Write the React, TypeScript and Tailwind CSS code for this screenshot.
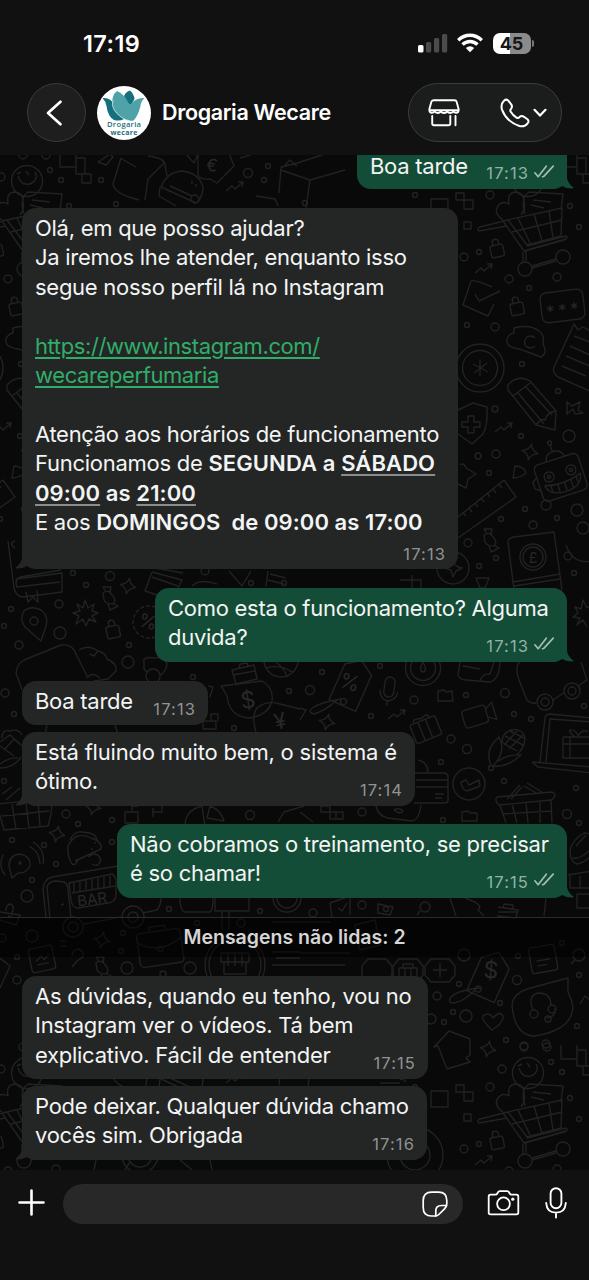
import React from 'react';
import clsx from 'clsx';

// Wallpaper primitives
const DOTS_TOP: [number, number, number][] = [
    [524, 155, 4], [547, 155, 4], [551, 170, 2.5], [562, 180, 2.5], [101, 180, 2.5], [502, 177, 4],
    [248, 173, 4.5], [268, 166, 2.5], [264, 180, 2.5], [415, 195, 2.5], [490, 195, 4], [464, 257, 4],
    [479, 252, 2.5], [570, 206, 2.5], [579, 227, 2.5], [557, 277, 4], [509, 279, 4], [529, 288, 2.5],
    [467, 325, 2.5], [495, 327, 4], [522, 364, 2.5], [558, 391, 2.5], [495, 409, 3], [521, 436, 2.5],
    [569, 436, 6], [496, 454, 4], [478, 456, 3], [489, 473, 2.5], [525, 509, 2.5], [501, 519, 2.5],
    [533, 525, 4], [546, 505, 5], [577, 510, 6], [557, 518, 2.5], [583, 528, 6], [468, 543, 4],
    [195, 199, 4], [116, 204, 2.5], [305, 203, 2.5],
];

const DOTS: [number, number, number][] = [
    [496, 558, 2.5], [479, 566, 2.5], [568, 556, 4], [574, 573, 2.5], [73, 573, 2.5], [110, 576, 4.5],
    [86, 585, 2.5], [59, 604, 4], [11, 609, 2.5], [4, 626, 2.5], [60, 633, 6], [19, 645, 4], [129, 645, 2.5],
    [128, 662, 6], [205, 571, 4], [251, 583, 2.5], [289, 691, 2.5], [5, 693, 4], [14, 714, 2.5], [4, 781, 2.5],
    [193, 677, 2.5], [234, 728, 2.5], [322, 672, 2.5], [310, 690, 4.5], [380, 666, 2.5], [414, 700, 4],
    [466, 695, 2.5], [505, 693, 4.5], [371, 716, 2.5], [514, 714, 2.5], [531, 719, 2.5], [451, 739, 4],
    [467, 749, 4.5], [441, 762, 2.5], [504, 781, 2.5], [576, 788, 2.5], [567, 814, 4.5], [579, 823, 2.5],
    [443, 820, 2.5], [362, 812, 4], [362, 905, 4], [386, 909, 2.5], [313, 913, 4], [66, 814, 4], [78, 824, 2.5],
    [112, 820, 2.5], [250, 815, 4.5], [12, 840, 2.5], [44, 845, 2.5], [112, 842, 2.5], [56, 864, 2.5],
    [32, 880, 2.5], [27, 896, 6], [169, 909, 2.5], [260, 911, 2.5], [32, 936, 6], [2, 938, 4], [123, 933, 2.5],
    [121, 951, 2.5], [17, 980, 4], [17, 957, 2.5], [127, 968, 6], [190, 968, 6], [163, 974, 3], [464, 955, 6],
    [518, 956, 2.5], [517, 980, 4.5], [459, 984, 2.5], [437, 996, 4], [500, 1003, 2.5], [453, 1012, 2.5],
    [466, 1016, 6], [444, 1022, 2.5], [431, 1019, 5], [579, 975, 2.5], [577, 1026, 2.5], [506, 1040, 2.5],
    [524, 1046, 4], [546, 1044, 4], [284, 583, 2.5], [562, 943, 2.5], [241, 923, 4], [197, 923, 2.5], [584, 706, 2.5],
];

const STARS: [number, number][] = [[128, 586], [327, 722], [93, 807], [57, 834], [102, 940], [488, 1049]];

const Dots = ({ items }: { items: [number, number, number][] }) => (
    <>
        {items.map(([x, y, r]) => (
            <circle key={`${x}-${y}`} cx={x} cy={y} r={r} />
        ))}
    </>
);

const Star = ({ x, y }: { x: number; y: number }) => (
    <path transform={`translate(${x} ${y}) rotate(12)`} d="M0-8Q1-2 8 0Q1 2 0 8Q-1 2-8 0Q-1-2 0-8Z" />
);

const Lock = ({ x, y }: { x: number; y: number }) => (
    <g transform={`translate(${x} ${y}) rotate(-12)`}>
        <rect x="-6.500" y="-5" width="13" height="12" rx="2" />
        <path d="M-3-5V-8A3 3 0 0 1 3-8V-5" />
    </g>
);

const Trend = ({ x, y }: { x: number; y: number }) => (
    <path transform={`translate(${x} ${y})`} d="M-9 4L-3-1L0 2L8-5M3-5L8-5L7 0" />
);

const Candy = ({ x, y }: { x: number; y: number }) => (
    <path transform={`translate(${x} ${y})`} d="M-6-5Q0-9 3-3Q8 2 4 6Q-3 6-5 2ZM-3-6L-6-11L2-11L1-6M4 5L9 8L1 12L-1 6" />
);

const Mark = ({ x, y, s = 16, rot = 0, children }: { x: number; y: number; s?: number; rot?: number; children: React.ReactNode }) => (
    <text
        transform={`translate(${x} ${y}) rotate(${rot})`}
        fontSize={s}
        textAnchor="middle"
        dominantBaseline="central"
        fill="#282828"
        stroke="none"
        fontFamily="Inter, sans-serif"
    >
        {children}
    </text>
);

const UpperDoodles = () => (
    <g id="upper">
        <Dots items={DOTS_TOP} />
        {/* ice cream scoop */}
        <circle cx="528" cy="181" r="15.500" />
        <path d="M519 176Q522 186 531 184Q540 180 536 172M518 174L522 172M527 171L530 175" />
        {/* steps */}
        <path d="M561 153V167H577V153M577 158H586V174H577V167M583 174H592V183H583Z" />
        <path d="M98 162L110 154L113 157L106 165Z" />
        {/* bag */}
        <path d="M121 158L113 184Q114 192 129 197L139 200M120 158L136 167M148 156Q165 158 165 165L167 176M165 162L148 179L145 200" />
        {/* burger */}
        <path d="M161 187Q167 172 182 171Q199 173 203 187Q203 196 197 203M161 187L196 203M160 187L159 196L176 206M170 186L192 196M192 181V184M196 184V187" />
        <path d="M198 154V175Q200 180 210 179L217 183L234 166L229 153M186 154L194 163L198 154" />
        <Mark x={212} y={165} s={17} rot={8}>€</Mark>
        <Trend x={235} y={187} />
        <path d="M281 167L294 164L322 155M281 167L279 193M281 170L310 180L345 170M310 180L306 208M285 165L290 160L297 166M256 196L275 199L278 206M240 158Q250 156 255 152" />
        {/* shopping cart */}
        <rect x="431" y="199" width="17" height="16" />
        <rect x="456" y="193" width="8" height="7" />
        <rect x="464" y="200" width="9" height="9" />
        <rect x="464" y="222" width="7" height="7" />
        <path d="M503 220Q493 213 498 206Q502 200 509 204Q507 193 515 192Q524 192 524 202Q526 209 521 215" />
        <path d="M525 214Q520 198 529 192L563 194L561 210M533 200L551 202M531 205L544 208" />
        <path d="M503 221L524 251L566 239M508 220L527 245L561 236M503 221L562 208L561 236M512 232L562 220M518 218L530 243M534 214L542 241M549 211L553 238" />
        <path d="M504 221L480 227Q476 229 479 231L507 226M524 251L564 240Q569 238 566 236L527 246M523 252V262M526 251V261M532 266L556 259M532 268L556 261" />
        <circle cx="525" cy="269" r="7" />
        <circle cx="563" cy="257" r="7" />
        <Lock x={497} y={250} />
        <Trend x={484} y={269} />
        <path d="M494 304L488 316L463 305L471 281Q474 279 492 287M475 294L479 301L500 291" />
        <Lock x={517} y={308} />
        <g transform="rotate(-7 562 306)">
            <rect x="541" y="291" width="43" height="30" rx="6" />
            <Mark x={550} y={310} s={17}>*</Mark>
            <Mark x={562} y={310} s={17}>*</Mark>
            <Mark x={574} y={310} s={17}>*</Mark>
        </g>
        <path d="M514 328Q530 324 539 331Q545 335 543 344Q548 353 541 357Q528 352 519 349Q505 347 507 339Q509 334 514 333Z" />
        <path d="M535 338A6 6 0 1 0 535 346" />
        <path d="M592 392L558 377Q552 372 554 367L574 324L578 330L583 327L592 332M574 336L592 343M570 346L592 356M566 356L592 367M562 366L586 376" />
        <circle cx="480" cy="368" r="24" />
        <circle cx="480" cy="368" r="17.500" />
        <path d="M480 360V376M473 364L488 372M487 363L474 373" />
        {/* pencil */}
        <path d="M508 390L536 425L555 430L556 411L530 381Q518 374 508 385ZM513 396L530 383M518 393L544 424M525 386L552 415M536 425Q541 418 545 420Q547 412 556 411" />
        <path d="M567 402L572 406L580 402L578 410L583 413L575 414L573 409L567 414Z" />
        <path d="M458 410L473 403L487 407Q488 425 483 434L472 444L458 434M468 416H474V422H480V427H474V433H468V427H462V422H468Z" />
        <Trend x={504} y={428} />
        <Star x={530} y={452} />
        <path d="M513 478L515 466Q524 466 526 473Q520 478 513 478Z" />
        {/* robot */}
        <g transform="rotate(-18 562 478)">
            <rect x="538" y="458" width="46" height="38" rx="5" />
            <circle cx="550" cy="473" r="5" />
            <circle cx="550" cy="473" r="1.500" />
            <circle cx="573" cy="473" r="5" />
            <circle cx="573" cy="473" r="1.500" />
            <path d="M543 480Q562 486 581 479Q579 492 562 492Q546 492 543 480M549 482V488M556 483V491M563 483V491M570 482V491M576 481V487M552 458Q553 450 561 450Q570 450 571 458M561 450V443M538 470L533 473V480L538 484" />
            <circle cx="561" cy="441" r="2" />
        </g>
        <path d="M460 465Q464 462 466 468L476 474L468 479L466 488L458 484" />
        {/* ruler */}
        <path d="M458 517L504 480L516 497L458 538M463 513L466 516M469 508L472 512M475 503L478 507M481 498L484 502M487 493L490 497M493 489L496 493M499 484L502 488" />
        <Candy x={490} y={540} />
    </g>
);

const LowerDoodles = () => (
    <g>
        <Dots items={DOTS} />
        {STARS.map(([x, y]) => (
            <Star key={x} x={x} y={y} />
        ))}
        {/* banknote book */}
        <path d="M514 590L508 542Q508 538 514 537L554 532L562 590M513 582L560 574M514 586L560 579" />
        <circle cx="533" cy="557" r="13" />
        <circle cx="533" cy="557" r="10" />
        <Mark x={533} y={557} s={14}>£</Mark>
        <circle cx="453" cy="568" r="16" />
        <path d="M453 560L456 566L462 568L456 571L453 577L451 570L445 568L450 565ZM476 578H489L485 588H480ZM412 575V588M400 580H421V590M566 545Q573 565 592 561" />
        <path d="M8 541L14 588Q16 597 23 597L62 592V573L16 579M61 570L20 577Q14 580 17 587L60 582M26 592L28 602L33 597L38 602L37 590M15 548Q8 543 15 541" />
        <Candy x={109} y={598} />
        <path d="M592 604L587 608L583 600L581 609L575 607L578 613L573 617L580 618L577 625L583 620L587 627" />
        <path d="M85 600L88 608L94 604L92 611L98 613L92 616L96 622L89 619L86 626L83 619L76 624L79 616L73 613L80 611L77 604L83 608Z" />
        <path d="M41 641L25 627Q19 619 24 611Q31 605 41 610Q49 616 46 626Z" />
        <circle cx="34" cy="621" r="4" />
        <Lock x={113} y={631} />
        <circle cx="149" cy="622" r="16" strokeDasharray="4 2" />
        <Mark x={148} y={622} s={19} rot={15}>%</Mark>
        <path d="M22 690L16 673Q17 664 24 660L61 645Q70 644 74 650L88 678M79 650Q88 644 98 651L94 656L90 654M98 651Q106 653 107 659Q118 664 116 671L108 679L94 681M87 678Q92 671 100 678M152 572L145 591L160 596M152 572L182 580L178 588M155 568L183 573M152 577L178 586" />
        <path d="M143 661Q146 656 153 658Q165 656 167 664Q166 672 160 675M144 661V669Q147 673 149 671" />
        <circle cx="153" cy="676" r="7" />
        <path d="M229 571L242 586L251 571M192 586Q200 578 217 584M268 571L266 586M270 574L286 578M268 580L284 584" />
        <path d="M232 670L254 665L257 679L236 684ZM233 675L255 671M239 668L240 664L247 663L248 666" />
        <circle cx="281" cy="660" r="17" />
        <path d="M266 668Q280 664 292 672M276 662Q285 669 287 677" />
        <path d="M221 686L262 681Q274 688 272 701Q268 716 248 718Q229 716 227 696Z" />
        <Mark x={248} y={700} s={23} rot={-8}>$</Mark>
        <path d="M256 732Q251 717 257 708Q266 700 280 704L300 709" />
        <Mark x={280} y={721} s={22} rot={-12}>¥</Mark>
        <path d="M203 721H216V729H203ZM211 721V714H218V721M208 686L213 687L210 697M47 725L45 734M115 725L118 734" />
        {/* raspberry */}
        <path d="M2 738Q2 729 10 731Q18 728 22 735M0 742L10 735L20 744M4 750L14 739L22 746M0 746L14 756M0 768Q14 768 21 757M0 764Q10 757 18 758M20 788L6 800M12 787L2 794" />
        {/* price tag */}
        <g transform="rotate(24 350 687)">
            <path d="M336 668L350 658L365 668V707H336Z" />
            <circle cx="350" cy="703" r="3" />
        </g>
        <Mark x={350} y={682} s={21} rot={18}>%</Mark>
        <path d="M341 699Q322 702 314 707Q306 712 314 714Q325 711 337 700M300 708L306 710L300 720" />
        <circle cx="423" cy="668" r="17.500" />
        <circle cx="423" cy="668" r="12.500" />
        <path d="M423 662Q418 671 423 672Q428 671 423 662" />
        <g transform="rotate(8 389 690)">
            <rect x="384" y="677" width="10" height="20" rx="5" />
            <path d="M380 691Q382 701 389 701Q397 700 398 691M389 701V706" />
        </g>
        <path d="M438 691L444 690L446 692L452 691L453 701L438 701Z" />
        <path d="M460 662L458 675Q460 680 466 680L490 682Q499 680 500 662M463 666L480 669M480 680Q484 673 490 674L494 662" />
        <path d="M520 661Q514 668 519 680L527 700Q531 704 536 703M520 661L526 658M553 700L565 692M578 686L587 680L581 662" />
        <circle cx="545" cy="702" r="8" />
        <circle cx="545" cy="702" r="4" />
        <circle cx="572" cy="691" r="8" />
        <circle cx="572" cy="691" r="4" />
        <Trend x={397} y={715} />
        <g transform="rotate(-22 425 729)">
            <rect x="412" y="720" width="27" height="20" rx="2" />
            <path d="M421 720V740M429 720V740M417 720Q416 714 425 718Q434 714 433 720" />
        </g>
        <g transform="rotate(-17 477 716)">
            <rect x="463" y="707" width="24" height="18" rx="3" />
            <path d="M487 712L495 707V725L487 720" />
        </g>
        {/* corn */}
        <path d="M491 765Q484 750 499 737Q507 751 493 766Q507 768 521 755Q508 754 498 761M502 743Q502 733 511 730Q523 728 525 738Q524 750 516 755M505 736L523 745M510 731L524 738M503 743L517 751M518 730L504 745M523 735L509 749" />
        <circle cx="491" cy="768" r="2.500" />
        <path d="M540 762L545 718Q546 714 550 714L592 718M546 762L550 719L592 722M533 762L592 767M532 762L538 767L592 773M563 737H592M563 737V758H592M570 737V758M563 744H592M575 737Q568 731 570 730Q576 729 578 736Q583 728 588 732" />
        <path d="M410 773H445Q448 774 448 777V800Q448 803 445 803H414M416 780H448M416 787H448M435 794H444M435 798H442M418 760Q428 762 428 773M376 806Q378 816 388 818L412 821Q419 820 421 805M394 810Q400 807 403 811Q400 815 394 810" />
        <circle cx="469" cy="784" r="16" />
        <path d="M461 782L466 780L469 785L479 780L480 786L467 791Q462 790 461 782Z" />
        <path d="M497 797L552 792Q556 793 554 798L551 800L499 805Q494 801 497 797M500 805L506 823M551 800L552 823M512 804L517 823M526 803L528 823M540 802V823M502 814L552 811M507 799L520 785M511 799L522 787M524 786L538 794M527 783L542 792" />
        <path d="M462 812L468 811L470 813L477 813V821H462ZM321 806H330V812H343V819H330V812H321ZM336 812V819M300 812L313 822" />
        <path d="M-4 804L50 799Q54 806 48 826L4 830L-2 808M2 816L49 811M12 804L16 829M26 802L29 828M38 801L40 826M125 812H138V823H125ZM132 812V806H138M153 808V817M153 812H162V804H171V798" />
        <path d="M185 826Q185 810 202 806L205 826M210 806Q221 810 224 821L207 818ZM278 822L284 812L304 806" />
        {/* taco */}
        <path d="M72 864Q67 856 68 846Q76 830 91 838Q103 842 101 849L75 861M70 840Q74 831 82 832L90 833Q98 836 97 842M95 842V844M92 848V850M88 857Q97 850 101 860Q98 868 92 864M72 864Q76 866 78 860" />
        <path d="M12 878L9 866Q9 855 20 854Q31 856 30 866Q26 874 18 873ZM3 855Q-2 866 5 875M29 846Q40 852 40 864M33 842Q46 850 43 864" />
        <circle cx="20" cy="863" r="1" />
        {/* truck */}
        <path d="M46 918L43 889Q44 879 52 877L118 866M50 919L47 887Q49 881 56 881L64 882Q68 884 68 890L71 918M46 918H50M84 924L121 917M143 913L157 910Q161 905 161 898M69 883L112 874Q116 876 116 882V896Q115 902 108 903L78 908Q72 908 71 900ZM74 883V892M80 881V891M86 880V890M92 879V889M98 878V888M104 877V887M110 876V886M72 893L115 886M61 905L64 904" />
        <Mark x={92} y={899} s={15} rot={-8}>BAR</Mark>
        <circle cx="73" cy="927" r="10" />
        <circle cx="73" cy="927" r="5" />
        <circle cx="133" cy="917" r="11" />
        <circle cx="133" cy="917" r="5" />
        <path d="M180 898Q180 912 186 912H210Q213 910 213 898M215 898V911H249V898M222 912V929M229 912V929" />
        <circle cx="287" cy="898" r="14" />
        <circle cx="287" cy="898" r="10" />
        <path d="M0 912L20 915L16 925L0 920M6 911Q6 904 11 904Q15 907 12 913M8 915Q10 919 12 915" />
        <path d="M330 903L350 896V915M330 903L332 917M338 908L342 911L347 903M378 904L393 907L390 915L378 913ZM450 898L456 916M465 898Q485 905 478 910L484 916" />
        <circle cx="425" cy="907" r="5" />
        <path d="M498 907L518 910L516 918L497 916M503 908L504 904L513 905V909M498 912H517M420 911L417 915" />
        <path d="M592 834L584 833Q572 840 570 850Q570 862 577 864Q586 862 592 855M576 846L586 835M573 858Q580 860 592 848M568 875L592 871M570 876V888H580V876M580 888H592M546 898L544 916M577 894H592V908H577Z" />
        {/* calendar, briefcase, shop window */}
        <g transform="rotate(-12 42 959)">
            <rect x="30" y="947" width="24" height="24" rx="3" />
            <path d="M36 960L42 956L44 960L50 956M36 964H48" />
        </g>
        <path d="M60 941H66M72 956Q72 950 78 949Q85 951 83 957L77 961L72 967M60 946H66" />
        <Candy x={102} y={968} />
        <g transform="rotate(-8 160 946)">
            <rect x="138" y="931" width="44" height="34" rx="4" />
            <path d="M138 940Q160 955 182 940M151 931L152 926H167L168 931" />
            <circle cx="160" cy="949" r="2.500" />
        </g>
        <circle cx="235" cy="965" r="30" />
        <circle cx="235" cy="965" r="26" />
        <path d="M221 953H249V962H221ZM224 962V974H246V962M228 953V966M235 953V966M242 953V966M272 952H300M276 958H300M272 965H300M0 958L10 966L0 988" />
        <path d="M300 953H350M300 965H345M272 922H330M355 925L375 920L380 945L360 950Z" />
        {[377, 408, 440].map((x) => (
            <path key={x} transform={`translate(${x} 970)`} d="M-9-11H9L15-4V5L9 12H-9L-15 5V-4Z" />
        ))}
        <path d="M440 963V977M433 970H447M399 968H417V980M399 968V980M405 968V980M411 968V980M403 968V964H413V968" />
        <g transform="rotate(24 488 977)">
            <path d="M474 962L488 950L504 961V998H474Z" />
            <circle cx="484" cy="992" r="3" />
        </g>
        <Mark x={491} y={970} s={23} rot={4}>$</Mark>
        <path d="M480 988Q458 990 451 997Q447 1003 454 1003Q463 1002 475 990" />
        <g transform="rotate(-10 543 958)">
            <rect x="530" y="946" width="26" height="26" rx="3" />
            <path d="M536 960H550M536 965H546" />
        </g>
        <path d="M568 978L534 987Q512 992 512 1006Q515 1036 535 1036Q572 1030 573 1007Q572 1000 568 992Z" />
        <path d="M533 1010Q527 996 538 993Q551 993 551 1005M547 1018Q556 1017 555 1008" />
        <circle cx="534" cy="1014" r="4" />
        <circle cx="552" cy="1009" r="4" />
        <circle cx="548" cy="1019" r="3" />
        <circle cx="579" cy="955" r="6" />
        <path d="M575 960L571 964M492 1030Q481 1020 483 1016Q489 1011 493 1018Q500 1010 503 1016Q504 1023 492 1030Z" />
        <path d="M434 1047L449 1031L470 1039L470 1055L466 1058L470 1062L447 1069L438 1046Z" />
        <path d="M400 1080Q403 1078 406 1082M380 1083H400M580 1004L585 996L592 1002" />
    </g>
);

const Wallpaper = () => (
    <svg className="absolute inset-0" width="589" height="1015" viewBox="0 155 589 1015" fill="none" stroke="#222222" strokeWidth="1.400" strokeLinejoin="round">
        <UpperDoodles />
        <use href="#upper" x="-501" />
        <use href="#upper" y="892" />
        <use href="#upper" x="-501" y="892" />
        <path d="M125 1170L130 1162M210 1160L212 1170M96 1160L94 1170M180 1160L192 1170" />
        <circle cx="140" cy="1155" r="18" />
        <circle cx="140" cy="1155" r="12" />
        <circle cx="415" cy="1155" r="28" />
        <circle cx="415" cy="1155" r="15" />
        <LowerDoodles />
    </svg>
);

const Ticks = () => (
    <svg className="ml-[5px] mb-1" width="20" height="13" viewBox="0 0 20 13" fill="none" stroke="#a3bdb2" strokeWidth="1.700" strokeLinecap="round" strokeLinejoin="round">
        <path d="M0.900 7.800L4.100 11.700L12.300 1.200M8.600 11.700L10 11.200L19.200 1.200" />
    </svg>
);

const Time = ({ value, mine }: { value: string; mine?: boolean }) => (
    <span
        className={clsx(
            'flex items-center text-[16.5px] leading-[22px] tracking-[1.1px] relative top-[4px]',
            mine ? 'text-[#91b3a4]' : '-mr-[1px] text-[#919393]'
        )}
    >
        {value}
        {mine && <Ticks />}
    </span>
);

interface BubbleProps {
    className: string;
    mine?: boolean;
    tail?: boolean;
    children: React.ReactNode;
}

const Bubble = ({ className, mine, tail, children }: BubbleProps) => (
    <div
        className={clsx(
            'relative shrink-0 px-[13px] text-[22px] leading-[29.4px] tracking-[-0.27px] text-[#f3f4f4] whitespace-nowrap',
            mine ? 'self-end mr-[22px] bg-[#144d37]' : 'self-start ml-[22px] bg-[#242626]',
            className
        )}
    >
        {children}
        {tail && (
            <svg
                className={clsx('absolute bottom-0', mine ? '-right-[7px]' : '-left-[7px] -scale-x-100')}
                width="24"
                height="20"
                viewBox="0 0 24 20"
                fill={mine ? '#144d37' : '#242626'}
            >
                <path d="M17 0V9Q18 15 23.500 18.500Q23.500 19.500 22 19.500Q16.500 19.500 12 17L4 20Q0 12 8 6Z" />
            </svg>
        )}
    </div>
);

const Line = ({ className, children }: { className?: string; children?: React.ReactNode }) => (
    <div className={clsx('h-[29.4px]', className)}>{children}</div>
);

const StatusBar = () => (
    <div className="flex h-[83px] shrink-0 items-start justify-between pl-[83px] pr-[55px] pt-[32px]">
        <span className="text-[23.5px] font-semibold leading-6 tracking-[0.4px]">17:19</span>
        <div className="flex items-start pt-px">
            <svg width="30" height="20" viewBox="0 0 30 20" fill="#4b4b4b">
                <rect x="0" y="12" width="5.500" height="7.500" rx="1.500" fill="#fff" />
                <rect x="8" y="9" width="5.200" height="10.500" rx="1.500" />
                <rect x="16" y="5" width="5.200" height="14.500" rx="1.500" />
                <rect x="24" y="1" width="5.200" height="18.500" rx="1.500" />
            </svg>
            <svg className="ml-[9px]" width="26" height="20" viewBox="0 0 26 20" fill="none" stroke="#fff" strokeWidth="3.400">
                <path d="M1.200 7.200Q6.500 2.200 13 2.200Q19.500 2.200 24.800 7.200" />
                <path d="M5.500 11.600Q8.800 8.500 13 8.500Q17.200 8.500 20.500 11.600" />
                <path d="M13 19.200L8.800 15Q13 11.300 17.200 15Z" fill="#fff" stroke="none" />
            </svg>
            <div className="ml-[10px] flex h-[21px] w-[38px] items-center justify-center rounded-[7px] bg-[linear-gradient(90deg,#fff_45%,#8b8b8b_45%)] text-[18px] font-bold leading-none text-[#161616]">
                45
            </div>
            <div className="ml-px mt-[7px] h-[7px] w-[2.5px] rounded-r-full bg-[#777]" />
        </div>
    </div>
);

const Logo = () => (
    <svg width="54" height="54" viewBox="0 0 54 54">
        <circle cx="27" cy="27" r="27" fill="#fff" />
        <path d="M5.500 12Q14 11 18 20L27 33Q23 35.500 17 34Q11 31 9.500 20Q8.500 15 5.500 12Z" fill="#13707c" />
        <path d="M27 10Q29 5.500 33 4.500Q37 8 37.500 13L34 19Q29 18 27 10Z" fill="#13707c" />
        <path d="M20 5Q27 8 31 16Q32.500 18.500 34 18.500Q38 11.500 47.500 12Q44 15 43.500 20Q41 30 36.500 34.500Q29 35.500 24 31Q12 23 16 11Q17 7 20 5Z" fill="#4fa3a8" />
        <path d="M16 14Q13 23 24 31Q28 34 33 35" stroke="#fff" strokeWidth="0.600" fill="none" />
        <text x="27" y="41" textAnchor="middle" fontSize="7.600" fontWeight="600" fill="#1c6f78" fontFamily="'Open Sans', sans-serif" textLength="34">Drogaria</text>
        <text x="27" y="48.600" textAnchor="middle" fontSize="7" fontWeight="700" fill="#1c6f78" fontFamily="'Open Sans', sans-serif" textLength="27">wecare</text>
    </svg>
);

const Header = () => (
    <div className="flex h-[59px] shrink-0 items-center pl-[27px] pr-[27px]">
        <button className="flex h-[59px] w-[59px] items-center justify-center rounded-full border border-[#3b3b3b] bg-[#1e1e1e] pr-[3px]">
            <svg width="18" height="28" viewBox="0 0 18 28" fill="none" stroke="#fff" strokeWidth="2.700" strokeLinecap="round" strokeLinejoin="round">
                <path d="M14.500 2.800L2 14L14.500 25.200" />
            </svg>
        </button>
        <div className="ml-[11px]">
            <Logo />
        </div>
        <h1 className="ml-[11px] whitespace-nowrap text-[21.5px] font-semibold tracking-[-0.35px]">Drogaria Wecare</h1>
        <div className="ml-auto flex h-[59px] w-[154px] items-center rounded-full border border-[#3a3d3c] bg-[#1b1d1d] pl-[19px]">
            <svg width="32" height="28" viewBox="0 0 32 28" fill="none" stroke="#fff" strokeWidth="1.900" strokeLinecap="round" strokeLinejoin="round">
                <path d="M5.500 1.200H26.500Q28.200 1.200 28.700 3L30.700 10.500Q30.700 13.800 28.200 13.800Q26 13.800 25.400 12.200Q24.500 14 22.400 14Q20.200 14 19.200 12.200Q18.200 14 16 14Q13.800 14 12.800 12.200Q11.800 14 9.600 14Q7.500 14 6.600 12.200Q6 13.800 3.800 13.800Q1.300 13.800 1.300 10.500L3.300 3Q3.800 1.200 5.500 1.200Z" />
                <path d="M2 11.200H30M4.200 17V24.500Q4.200 26.200 6 26.200H20.500Q22.300 26.200 22.300 24.500V17M27.500 17V26.200" />
            </svg>
            <svg className="ml-[40px]" width="30" height="30" viewBox="0 0 30 30" fill="none" stroke="#fff" strokeWidth="2" strokeLinejoin="round">
                <path d="M4.200 2.600Q6.200 0.600 8.300 2.600L11.200 6.400Q12.700 8.600 11.200 10.600Q9.700 12.200 10.700 13.800Q13 17.600 16.800 19.800Q18.400 20.400 19.800 18.800Q21.600 17.200 24 18.800L27.400 21.200Q29.600 23.200 27.600 25.400Q24.600 29.400 19.400 28Q6.400 23.600 2 11.600Q0.400 6.200 4.200 2.600Z" />
            </svg>
            <svg className="ml-[3px]" width="14" height="10" viewBox="0 0 14 10" fill="none" stroke="#fff" strokeWidth="2.200" strokeLinecap="round" strokeLinejoin="round">
                <path d="M1.500 1.800L7 7.600L12.500 1.800" />
            </svg>
        </div>
    </div>
);

const Composer = () => (
    <div className="flex h-[110px] shrink-0 items-start bg-[#111111] pl-[18px] pt-[14px]">
        <svg className="mt-[5px]" width="27" height="27" viewBox="0 0 27 27" stroke="#fff" strokeWidth="2.600" strokeLinecap="round">
            <path d="M13.500 1.500V25.500M1.500 13.500H25.500" />
        </svg>
        <div className="ml-[18px] flex h-[40px] w-[400px] items-center justify-end rounded-full bg-[#282828] pr-[15px]">
            <svg width="26" height="26" viewBox="0 0 26 26" fill="none" stroke="#fff" strokeWidth="1.700" strokeLinecap="round" strokeLinejoin="round">
                <path d="M13.500 25H9.500Q1.200 25 1.200 16.500V9.500Q1.200 1.200 9.500 1.200H16.500Q24.800 1.200 24.800 9.500V12.500Q24.800 15.500 22.500 17.800L16.800 23.500Q15.300 25 13.500 25Z" />
                <path d="M13.800 25V20Q13.800 14.500 19.500 14.500H24.600" />
            </svg>
        </div>
        <svg className="ml-[24px] mt-[6px]" width="33" height="26" viewBox="0 0 33 26" fill="none" stroke="#fff" strokeWidth="1.800" strokeLinejoin="round">
            <path d="M3.500 4.600H8.500Q9.700 4.600 10.300 3.500L11 2.300Q11.500 1.200 12.800 1.200H20.200Q21.500 1.200 22 2.300L22.700 3.500Q23.300 4.600 24.500 4.600H29.500Q31.300 4.600 31.300 6.400V22.500Q31.300 24.300 29.500 24.300H3.500Q1.700 24.300 1.700 22.500V6.400Q1.700 4.600 3.500 4.600Z" />
            <circle cx="16.500" cy="13.800" r="6.400" />
            <circle cx="25.800" cy="9.200" r="1.600" fill="#fff" stroke="none" />
        </svg>
        <svg className="ml-[25px] mt-[3px]" width="22" height="32" viewBox="0 0 22 32" fill="none" stroke="#fff" strokeWidth="1.900" strokeLinecap="round">
            <rect x="5.600" y="1.200" width="10.800" height="20" rx="5.400" />
            <path d="M1.200 16Q1.800 25.600 11 25.600Q20.200 25.600 20.800 16M11 25.600V30.500" />
        </svg>
    </div>
);

const App: React.FC = () => {
    return (
        <div className="flex h-[1280px] w-[589px] flex-col overflow-hidden bg-[#111111] font-['Inter',sans-serif] text-white">
            <StatusBar />
            <Header />
            <div className="h-[13px] shrink-0" />

            <main className="relative flex h-[1015px] shrink-0 flex-col overflow-hidden bg-[#090909]">
                <Wallpaper />

                <Bubble mine tail className="h-[34px] w-[210px] rounded-b-[14px]">
                    <div className="flex items-start justify-between">
                        <div className="leading-[22px]">Boa tarde</div>
                        <div className="pt-[3px]">
                            <Time value="17:13" mine />
                        </div>
                    </div>
                </Bubble>

                <Bubble tail className="mt-[19px] h-[361px] w-[436px] rounded-[14px] pt-[6px]">
                    <Line>Olá, em que posso ajudar?</Line>
                    <Line>Ja iremos lhe atender, enquanto isso</Line>
                    <Line>segue nosso perfil lá no Instagram</Line>
                    <Line />
                    <div className="tracking-[-0.4px] text-[#2fae69] underline decoration-[1.5px] underline-offset-[3px]">
                        <Line>https://www.instagram.com/</Line>
                        <Line>wecareperfumaria</Line>
                    </div>
                    <Line />
                    <Line className="tracking-[-0.31px]">Atenção aos horários de funcionamento</Line>
                    <Line>
                        Funcionamos de <b className="font-semibold tracking-[0.1px]">SEGUNDA a <span className="underline decoration-[#8b8d8d] decoration-2 underline-offset-[3px]">SÁBADO</span></b>
                    </Line>
                    <Line className="font-semibold tracking-[0.1px]">
                        <span className="underline decoration-[#8b8d8d] decoration-2 underline-offset-[3px]">09:00</span> as{' '}
                        <span className="underline decoration-[#8b8d8d] decoration-2 underline-offset-[3px]">21:00</span>
                    </Line>
                    <Line>
                        E aos <b className="font-semibold tracking-[0.07px]">DOMINGOS&nbsp; de 09:00 as 17:00</b>
                    </Line>
                    <div className="flex justify-end pt-[2px]">
                        <Time value="17:13" />
                    </div>
                </Bubble>

                <Bubble mine tail className="mt-[19px] h-[74px] w-[412px] rounded-[14px] pt-[6px]">
                    <Line>Como esta o funcionamento? Alguma</Line>
                    <div className="flex items-end justify-between">
                        <Line>duvida?</Line>
                        <Time value="17:13" mine />
                    </div>
                </Bubble>

                <Bubble className="mt-[19px] h-[44px] w-[186px] rounded-[14px] pt-[6px]">
                    <div className="flex items-end justify-between">
                        <Line>Boa tarde</Line>
                        <Time value="17:13" />
                    </div>
                </Bubble>

                <Bubble tail className="mt-[7px] h-[74px] w-[393px] rounded-[14px] pt-[6px]">
                    <Line className="tracking-[-0.2px]">Está fluindo muito bem, o sistema é</Line>
                    <div className="flex items-end justify-between">
                        <Line>ótimo.</Line>
                        <Time value="17:14" />
                    </div>
                </Bubble>

                <Bubble mine tail className="mt-[18px] h-[74px] w-[450px] rounded-[14px] pt-[6px]">
                    <Line>Não cobramos o treinamento, se precisar</Line>
                    <div className="flex items-end justify-between">
                        <Line>é so chamar!</Line>
                        <Time value="17:15" mine />
                    </div>
                </Bubble>

                <div className="relative mt-[19px] flex h-[40px] shrink-0 items-center justify-center border-t border-[#2b2b2b] bg-black/50 text-[19.5px] font-semibold text-[#d5d5d5]">
                    Mensagens não lidas: 2
                </div>

                <Bubble className="mt-[19px] h-[103px] w-[406px] rounded-[14px] pt-[6px]">
                    <Line>As dúvidas, quando eu tenho, vou no</Line>
                    <Line>Instagram ver o vídeos. Tá bem</Line>
                    <div className="flex items-end justify-between">
                        <Line>explicativo. Fácil de entender</Line>
                        <Time value="17:15" />
                    </div>
                </Bubble>

                <Bubble tail className="mt-[7px] h-[74px] w-[405px] rounded-[14px] pt-[6px]">
                    <Line>Pode deixar. Qualquer dúvida chamo</Line>
                    <div className="flex items-end justify-between">
                        <Line>vocês sim. Obrigada</Line>
                        <Time value="17:16" />
                    </div>
                </Bubble>
            </main>

            <Composer />
        </div>
    );
};

export default App;
